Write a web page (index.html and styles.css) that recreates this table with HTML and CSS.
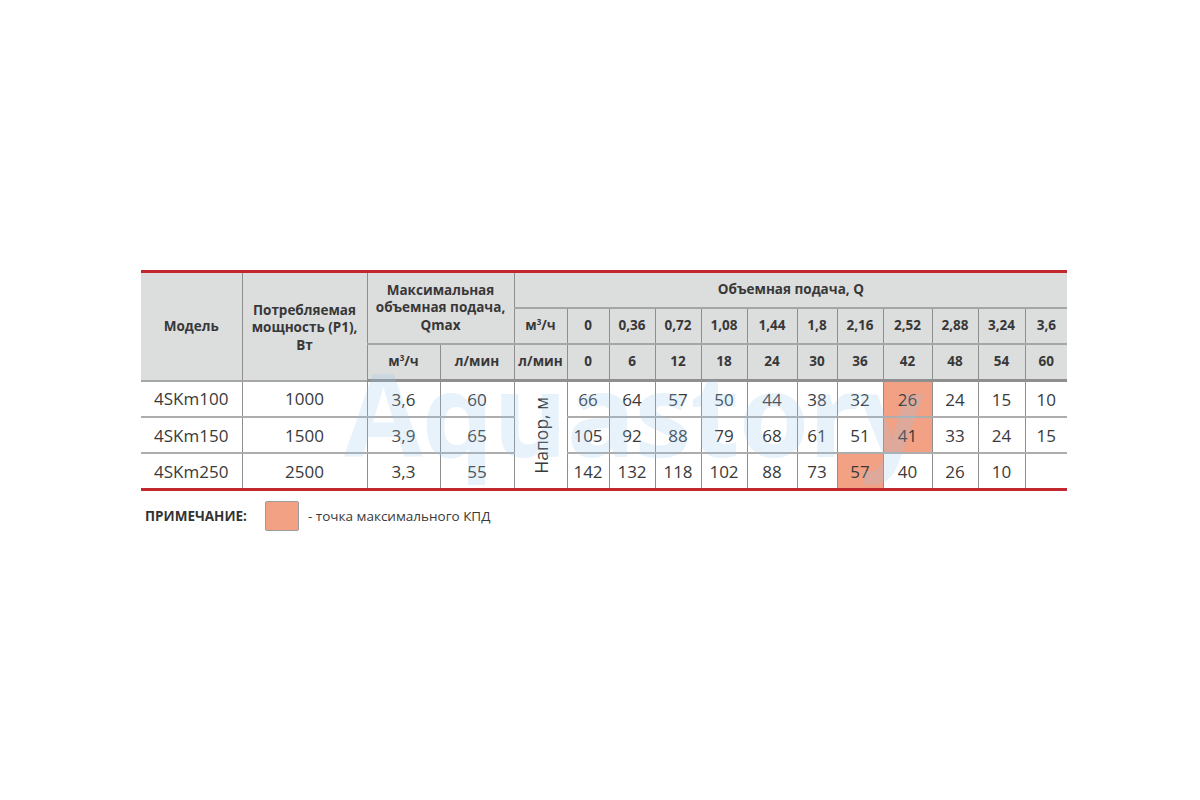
FILE: index.html
```html
<!DOCTYPE html>
<html lang="ru">
<head>
<meta charset="utf-8">
<title>4SKm</title>
<link rel="stylesheet" href="styles.css">
</head>
<body>
<div class="page">
  <div class="table-wrap">
    <table class="spec">
      <colgroup>
        <col class="c-model"><col class="c-power"><col class="c-qm"><col class="c-ql"><col class="c-lab">
        <col class="d42"><col class="d46"><col class="d46"><col class="d46"><col class="d50"><col class="d40"><col class="d46"><col class="d49"><col class="d46"><col class="d47"><col class="d42">
      </colgroup>
      <thead>
        <tr class="h1">
          <th rowspan="3">Модель</th>
          <th rowspan="3">Потребляемая<br>мощность (P1),<br>Вт</th>
          <th rowspan="2" colspan="2">Максимальная<br>объемная подача,<br>Qmax</th>
          <th colspan="12">Объемная подача, Q</th>
        </tr>
        <tr class="h2">
          <th>м<sup>3</sup>/ч</th>
          <th>0</th><th>0,36</th><th>0,72</th><th>1,08</th><th>1,44</th><th>1,8</th><th>2,16</th><th>2,52</th><th>2,88</th><th>3,24</th><th>3,6</th>
        </tr>
        <tr class="h3">
          <th>м<sup>3</sup>/ч</th>
          <th>л/мин</th>
          <th>л/мин</th>
          <th>0</th><th>6</th><th>12</th><th>18</th><th>24</th><th>30</th><th>36</th><th>42</th><th>48</th><th>54</th><th>60</th>
        </tr>
      </thead>
      <tbody>
        <tr class="r1">
          <td>4SKm100</td><td>1000</td><td>3,6</td><td>60</td>
          <td rowspan="3" class="lab"><span class="vert">Напор, м</span></td>
          <td>66</td><td>64</td><td>57</td><td>50</td><td>44</td><td>38</td><td>32</td><td class="hi">26</td><td>24</td><td>15</td><td>10</td>
        </tr>
        <tr>
          <td>4SKm150</td><td>1500</td><td>3,9</td><td>65</td>
          <td>105</td><td>92</td><td>88</td><td>79</td><td>68</td><td>61</td><td>51</td><td class="hi">41</td><td>33</td><td>24</td><td>15</td>
        </tr>
        <tr class="rlast">
          <td>4SKm250</td><td>2500</td><td>3,3</td><td>55</td>
          <td>142</td><td>132</td><td>118</td><td>102</td><td>88</td><td>73</td><td class="hi">57</td><td>40</td><td>26</td><td>10</td><td></td>
        </tr>
      </tbody>
    </table>
    <div class="watermark">Aquastory</div>
  </div>
  <div class="note">
    <span class="note-title">ПРИМЕЧАНИЕ:</span>
    <span class="swatch"></span>
    <span class="note-text">- точка максимального КПД</span>
  </div>
</div>
</body>
</html>
```

FILE: styles.css
```css
html, body {
  margin: 0;
  padding: 0;
  background: #ffffff;
}

body {
  font-family: "Open Sans", "Noto Sans", "Liberation Sans", sans-serif;
  color: #3a3a3a;
}

.page {
  padding: 270px 0 0 141px;
}

.table-wrap {
  position: relative;
  width: 926px;
}

.spec {
  border-collapse: collapse;
  table-layout: fixed;
  width: 926px;
  border-top: 3px solid #c1272d;
  border-bottom: 3px solid #c1272d;
}

.c-model { width: 101px; }
.c-power { width: 125px; }
.c-qm { width: 73px; }
.c-ql { width: 74px; }
.c-lab { width: 53px; }
.d40 { width: 40px; }
.d42 { width: 42px; }
.d46 { width: 46px; }
.d47 { width: 47px; }
.d49 { width: 49px; }
.d50 { width: 50px; }

.spec th {
  background: #dcdddd;
  font-weight: 700;
  font-size: 13.5px;
  line-height: 17.5px;
  color: #383838;
  text-align: center;
  vertical-align: middle;
  padding: 0;
  border-left: 1px solid #8e8e8e;
  border-right: 1px solid #8e8e8e;
  border-bottom: 2px solid #a6a6a6;
  white-space: nowrap;
}

.spec th:first-child {
  border-left: none;
}

.spec .h1 th {
  height: 34px;
}

.spec .h1 th:nth-child(2) {
  padding-top: 3px;
}

.spec .h2 th,
.spec .h3 th {
  height: 34px;
}

.spec .h3 th {
  border-bottom: 3px solid #8f8f8f;
}

.spec .h1 th:last-child,
.spec .h2 th:last-child,
.spec .h3 th:last-child {
  border-right: none;
}

.spec sup {
  font-size: 8px;
  line-height: 0;
  vertical-align: 5px;
}

.spec td {
  font-size: 17px;
  font-weight: 400;
  color: #3a3a3a;
  text-align: center;
  vertical-align: middle;
  padding: 0;
  height: 34px;
  border-left: 1px solid #8e8e8e;
  border-right: 1px solid #8e8e8e;
  border-bottom: 2px solid #adadad;
}

.spec td:first-child {
  border-left: none;
}

.spec tr td:last-child {
  border-right: none;
}

.spec .rlast td {
  border-bottom: none;
}

.spec td.lab {
  border-bottom: none;
}

.spec td.hi {
  background: #f2a184;
}

.vert {
  display: inline-block;
  writing-mode: vertical-rl;
  transform: rotate(180deg);
  font-size: 17.5px;
  line-height: 20px;
  margin-top: 6px;
}

.watermark {
  position: absolute;
  left: 203px;
  top: 86px;
  font-family: "Open Sans", "Liberation Sans", sans-serif;
  font-weight: 700;
  font-size: 114px;
  line-height: 1;
  letter-spacing: -1px;
  color: rgba(150, 195, 230, 0.22);
  pointer-events: none;
  white-space: nowrap;
}

.note {
  display: flex;
  align-items: center;
  margin-top: 10px;
  padding-left: 4px;
}

.note-title {
  font-weight: 700;
  font-size: 13.5px;
  color: #333333;
  width: 120px;
}

.swatch {
  width: 32px;
  height: 28px;
  background: #f2a184;
  border: 1px solid #9a9a9a;
  border-radius: 2px;
  margin-right: 9px;
}

.note-text {
  font-size: 13.5px;
  color: #3a3a3a;
}
```
